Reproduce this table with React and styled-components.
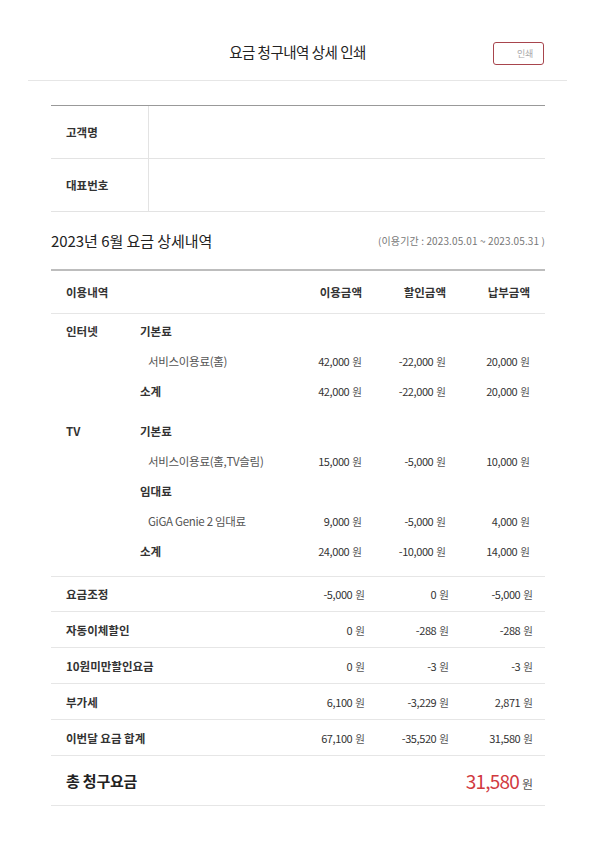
import React from "react";
import styled, { createGlobalStyle } from "styled-components";

const Global = createGlobalStyle`
  html, body { margin: 0; padding: 0; background: #fff; }
  body { font-family: "Noto Sans CJK KR", "Noto Sans", sans-serif; color: #333; }
  * { box-sizing: border-box; }
`;

const Page = styled.div`
  width: 595px;
  padding: 0 28px 40px;
`;

const Header = styled.header`
  display: grid;
  grid-template-columns: 1fr auto 1fr;
  align-items: center;
  height: 81px;
  padding-top: 26px;
  border-bottom: 1px solid #e6e6e6;
`;

const Title = styled.h1`
  grid-column: 2;
  margin: 0 0 3px;
  font-size: 14.5px;
  font-weight: 400;
  letter-spacing: -0.5px;
  color: #222;
`;

const PrintButton = styled.button`
  justify-self: end;
  margin-right: 23px;
  width: 51px;
  height: 23px;
  border: 1px solid #a8454d;
  border-radius: 3px;
  background: #fff;
  font-family: inherit;
  font-size: 9px;
  color: #aaa;
  text-align: right;
  padding: 0 10px 0 0;
  letter-spacing: -0.3px;
`;

const Content = styled.main`
  margin: 0 22px 0 23px;
`;

const InfoTable = styled.div`
  margin-top: 24px;
  border-top: 1px solid #999;
`;

const InfoRow = styled.div`
  display: grid;
  grid-template-columns: 98px 1fr;
  height: 53px;
  border-bottom: 1px solid #e3e3e3;
`;

const InfoLabel = styled.div`
  display: flex;
  align-items: center;
  padding-left: 15px;
  border-right: 1px solid #e3e3e3;
  font-size: 11.5px;
  font-weight: 600;
  color: #333;
  padding-bottom: 1px;
`;

const InfoValue = styled.div``;

const SectionHead = styled.div`
  display: flex;
  justify-content: space-between;
  align-items: center;
  height: 57px;
  padding-bottom: 1px;
`;

const SectionTitle = styled.h2`
  margin: 0;
  font-size: 15px;
  font-weight: 400;
  letter-spacing: -0.05px;
  color: #222;
`;

const Period = styled.span`
  font-size: 10px;
  color: #777;
  letter-spacing: 0.12px;
`;

const DetailTable = styled.div`
  border-top: 2px solid #bdbdbd;
`;

const Row = styled.div`
  display: grid;
  grid-template-columns: 74px 1fr 84px 84px 84px;
  align-items: center;
  padding: 0 ${(p) => p.$padRight ?? 15}px 0 15px;
  height: ${(p) => p.$h}px;
  border-bottom: ${(p) => (p.$line ? "1px solid #e6e6e6" : "none")};
`;

const HeadCell = styled.div`
  font-size: 11.5px;
  font-weight: 600;
  color: #333;
  text-align: ${(p) => (p.$right ? "right" : "left")};
  grid-column: ${(p) => p.$col || "auto"};
`;

const Body = styled.div`
  display: flex;
  flex-direction: column;
  gap: 10px;
  padding: 2px 0 10px;
  border-bottom: 1px solid #e6e6e6;
`;

const Group = styled.div``;

const Category = styled.div`
  grid-column: 1;
  font-size: 11.5px;
  font-weight: 600;
  color: #333;
`;

const Item = styled.div`
  grid-column: 2;
  font-size: 11.5px;
  font-weight: ${(p) => (p.$sub ? 400 : 600)};
  color: ${(p) => (p.$sub ? "#555" : "#333")};
  padding-left: ${(p) => (p.$sub ? 8 : 0)}px;
  letter-spacing: ${(p) => (p.$sub ? "-0.3px" : "0")};
`;

const SummaryLabel = styled.div`
  grid-column: 1 / 3;
  font-size: 11.5px;
  font-weight: 600;
  color: #333;
`;

const Amount = styled.div`
  text-align: right;
  font-size: 11px;
  color: #333;
  letter-spacing: -0.4px;
`;

const Won = styled.span`
  font-size: 10.5px;
  color: #555;
  margin-left: 3px;
  letter-spacing: 0;
`;

const TotalRow = styled.div`
  display: flex;
  justify-content: space-between;
  align-items: center;
  height: 50px;
  padding: 0 12px 0 15px;
  border-bottom: 1px solid #e6e6e6;
`;

const TotalLabel = styled.div`
  font-size: 15px;
  font-weight: 700;
  color: #222;
  letter-spacing: -0.2px;
`;

const TotalAmount = styled.div`
  display: flex;
  align-items: baseline;
`;

const TotalNumber = styled.span`
  font-size: 19px;
  color: #d13a3f;
  letter-spacing: -0.8px;
`;

const TotalWon = styled.span`
  font-size: 12px;
  color: #555;
  margin-left: 3px;
`;

const Money = ({ v }) => (
  <Amount>
    {v}
    <Won>원</Won>
  </Amount>
);

const groups = [
  {
    cat: "인터넷",
    rows: [
      { item: "기본료" },
      { item: "서비스이용료(홈)", sub: true, a: ["42,000", "-22,000", "20,000"] },
      { item: "소계", a: ["42,000", "-22,000", "20,000"] },
    ],
  },
  {
    cat: "TV",
    rows: [
      { item: "기본료" },
      { item: "서비스이용료(홈,TV슬림)", sub: true, a: ["15,000", "-5,000", "10,000"] },
      { item: "임대료" },
      { item: "GiGA Genie 2 임대료", sub: true, a: ["9,000", "-5,000", "4,000"] },
      { item: "소계", a: ["24,000", "-10,000", "14,000"] },
    ],
  },
];

const summary = [
  { label: "요금조정", a: ["-5,000", "0", "-5,000"], h: 35 },
  { label: "자동이체할인", a: ["0", "-288", "-288"], h: 36 },
  { label: "10원미만할인요금", a: ["0", "-3", "-3"], h: 36 },
  { label: "부가세", a: ["6,100", "-3,229", "2,871"], h: 36 },
  { label: "이번달 요금 합계", a: ["67,100", "-35,520", "31,580"], h: 36 },
];

export default function App() {
  return (
    <Page>
      <Global />
      <Header>
        <Title>요금 청구내역 상세 인쇄</Title>
        <PrintButton>인쇄</PrintButton>
      </Header>
      <Content>
        <InfoTable>
          <InfoRow>
            <InfoLabel>고객명</InfoLabel>
            <InfoValue />
          </InfoRow>
          <InfoRow>
            <InfoLabel>대표번호</InfoLabel>
            <InfoValue />
          </InfoRow>
        </InfoTable>

        <SectionHead>
          <SectionTitle>2023년 6월 요금 상세내역</SectionTitle>
          <Period>(이용기간 : 2023.05.01 ~ 2023.05.31 )</Period>
        </SectionHead>

        <DetailTable>
          <Row $h={43} $line>
            <HeadCell $col="1 / 3">이용내역</HeadCell>
            <HeadCell $right>이용금액</HeadCell>
            <HeadCell $right>할인금액</HeadCell>
            <HeadCell $right>납부금액</HeadCell>
          </Row>
          <Body>
            {groups.map((g) => (
              <Group key={g.cat}>
                {g.rows.map((r, i) => (
                  <Row key={i} $h={30}>
                    {i === 0 && <Category>{g.cat}</Category>}
                    <Item $sub={r.sub}>{r.item}</Item>
                    {r.a && r.a.map((v, j) => <Money key={j} v={v} />)}
                  </Row>
                ))}
              </Group>
            ))}
          </Body>
          {summary.map((s) => (
            <Row key={s.label} $h={s.h} $line $padRight={12}>
              <SummaryLabel>{s.label}</SummaryLabel>
              {s.a.map((v, j) => (
                <Money key={j} v={v} />
              ))}
            </Row>
          ))}
          <TotalRow>
            <TotalLabel>총 청구요금</TotalLabel>
            <TotalAmount>
              <TotalNumber>31,580</TotalNumber>
              <TotalWon>원</TotalWon>
            </TotalAmount>
          </TotalRow>
        </DetailTable>
      </Content>
    </Page>
  );
}
